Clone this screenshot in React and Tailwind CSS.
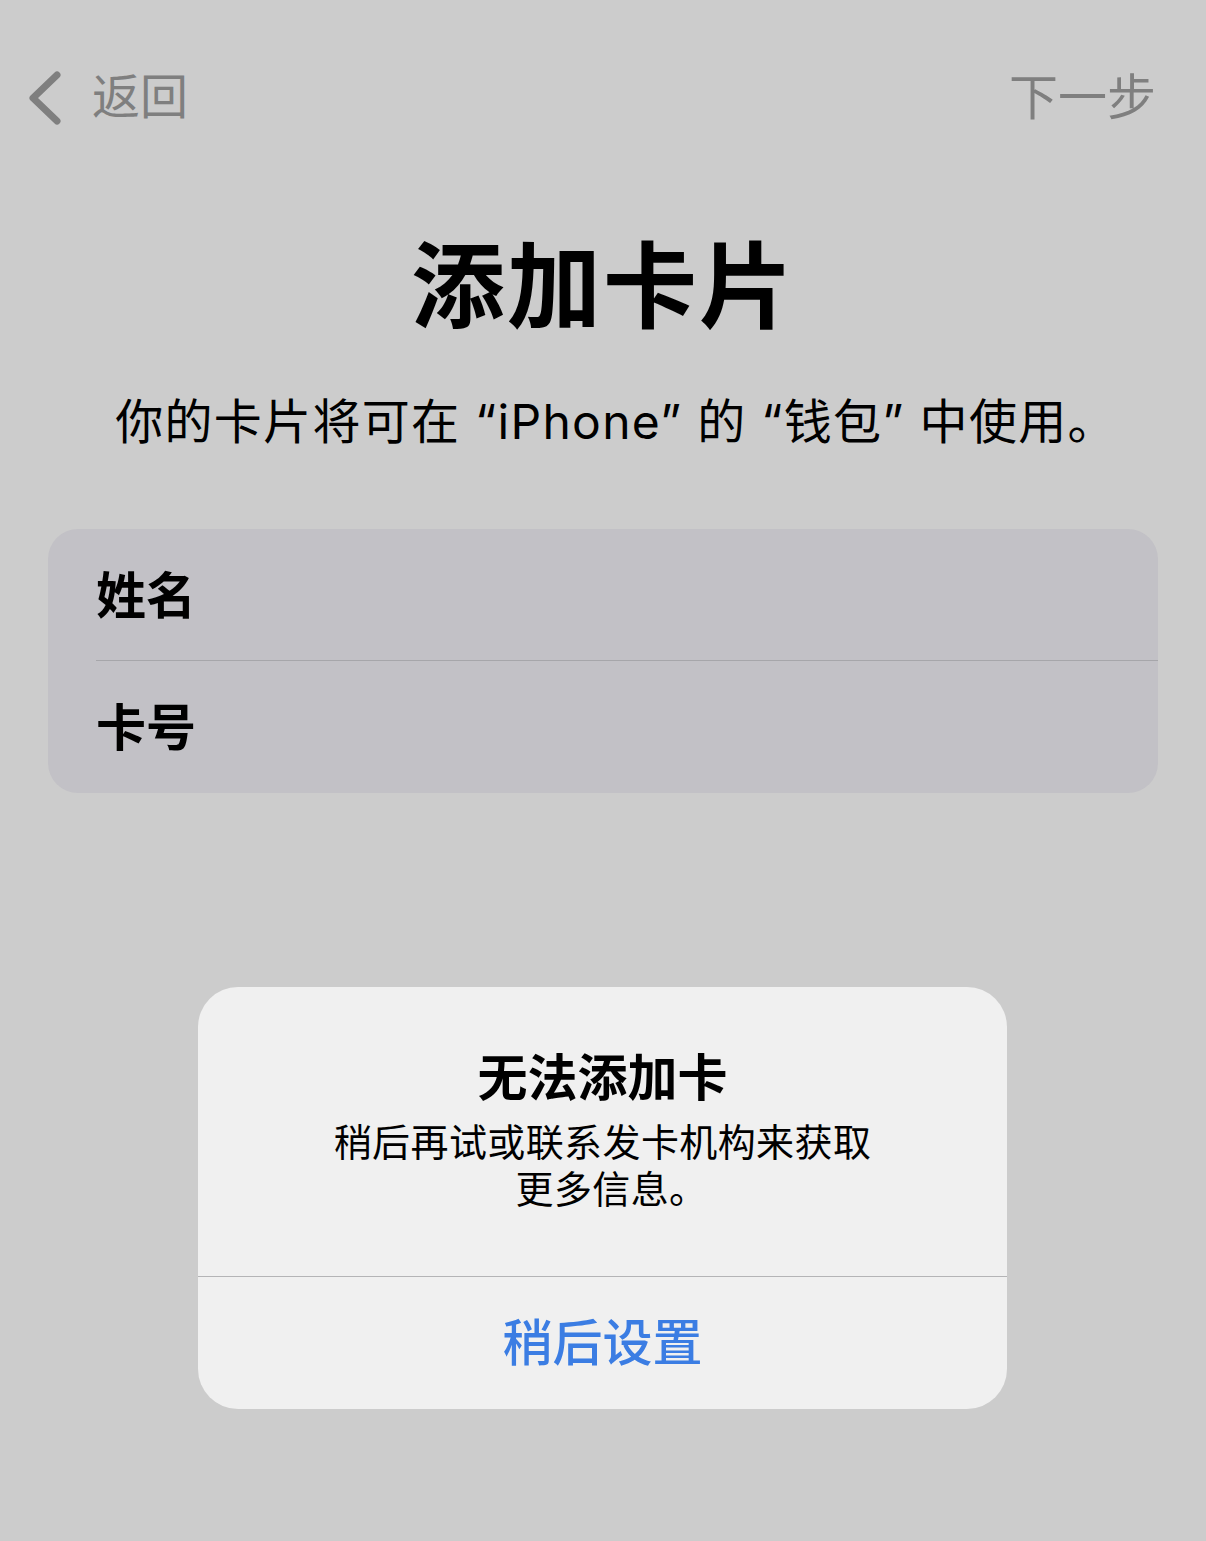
import React from 'react';

const font = { fontFamily: 'Inter, "Noto Sans CJK SC", sans-serif' };

function Chevron() {
  return (
    <svg width="40" height="60" viewBox="0 0 40 60" fill="none">
      <path d="M33 8 L9 31 L33 54" stroke="#7f7f7f" strokeWidth="7" strokeLinecap="round" strokeLinejoin="round" />
    </svg>
  );
}

export default function App() {
  return (
    <div className="min-h-screen w-full bg-[#cccccc] text-black" style={font}>
      {/* Nav bar */}
      <div className="pt-[60px] h-[134px] flex items-center justify-between pl-[24px] pr-[50px]">
        <div className="flex items-center gap-[28px]">
          <Chevron />
          <span className="text-[48px] leading-none text-[#7f7f7f]">返回</span>
        </div>
        <span className="text-[49px] leading-none text-[#7f7f7f]">下一步</span>
      </div>

      {/* Header */}
      <h1 className="mt-[106px] text-center text-[94px] leading-none font-bold tracking-[2px]">添加卡片</h1>
      <p className="mt-[64px] pl-[26px] text-center text-[48px] leading-none tracking-[1.3px]">你的卡片将可在 “iPhone” 的 “钱包” 中使用。</p>

      {/* Form card */}
      <div className="mt-[83px] mx-[48px] rounded-[30px] bg-[#c2c1c6] overflow-hidden">
        <div className="h-[131px] flex items-center pl-[48px] pt-[3px] text-[50px] font-semibold">姓名</div>
        <div className="ml-[48px] h-px bg-[#a6a6aa]" />
        <div className="h-[132px] flex items-center pl-[48px] pt-[3px] text-[50px] font-semibold">卡号</div>
      </div>

      {/* Alert */}
      <div className="mt-[194px] ml-[198px] w-[809px] rounded-[40px] bg-[#f0f0f0] overflow-hidden">
        <div className="h-[289px] flex flex-col items-center pt-[66px]">
          <div className="text-[50px] leading-none font-semibold">无法添加卡</div>
          <div className="mt-[16px] text-[38px] leading-[47px] text-center tracking-[0.4px] w-[600px]">
            稍后再试或联系发卡机构来获取
            <br />
            <span className="pl-[18px]">更多信息。</span>
          </div>
        </div>
        <div className="h-px bg-[#b4b4b6]" />
        <div className="h-[132px] flex items-center justify-center text-[50px] font-medium text-[#3b7de3]">稍后设置</div>
      </div>
    </div>
  );
}
